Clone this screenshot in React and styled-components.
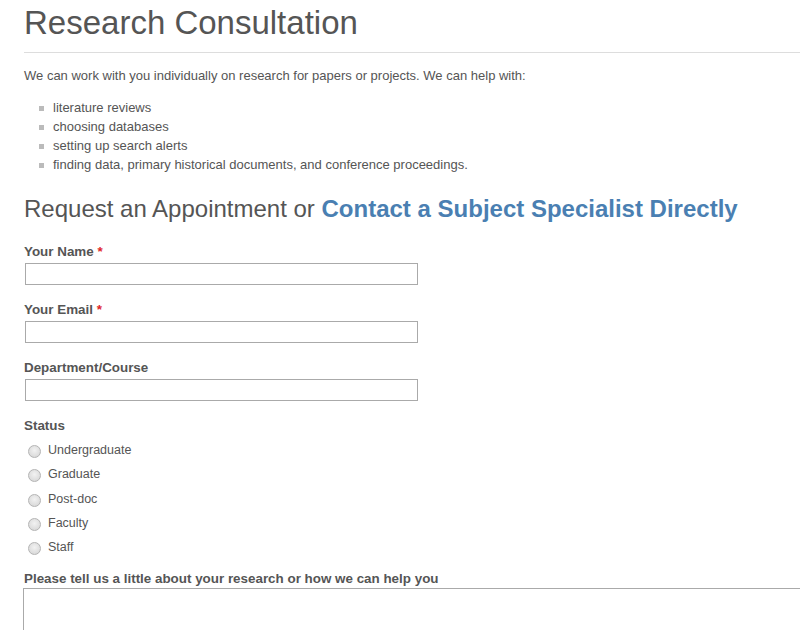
import React from "react";
import styled, { createGlobalStyle } from "styled-components";

const GlobalStyle = createGlobalStyle`
  body {
    margin: 0;
    background: #fff;
    font-family: "Liberation Sans", Arial, sans-serif;
    color: #555;
  }
`;

const Page = styled.div`
  padding: 0 0 0 24px;
  overflow: hidden;
  height: 630px;
`;

const Title = styled.h1`
  margin: 0;
  padding-top: 3px;
  font-size: 33px;
  font-weight: normal;
  line-height: 40px;
  color: #555;
  padding-bottom: 9px;
  border-bottom: 1px solid #ddd;
`;

const Intro = styled.p`
  margin: 14px 0 0;
  font-size: 13px;
  line-height: 18px;
`;

const List = styled.ul`
  margin: 13px 0 0;
  padding: 0 0 0 29px;
  list-style: none;
`;

const Item = styled.li`
  position: relative;
  font-size: 13px;
  line-height: 19px;

  &::before {
    content: "";
    position: absolute;
    left: -14px;
    top: 8px;
    width: 5px;
    height: 5px;
    background: #bbb;
  }
`;

const Subtitle = styled.h2`
  margin: 20px 0 0;
  font-size: 24px;
  font-weight: normal;
  line-height: 30px;
  color: #555;
`;

const SubLink = styled.a`
  color: #4a7fb2;
  font-weight: bold;
  text-decoration: none;
`;

const Form = styled.form`
  margin-top: 19px;
  display: flex;
  flex-direction: column;
`;

const Field = styled.div`
  display: flex;
  flex-direction: column;
  margin-bottom: ${(p) => p.gap || 16}px;
`;

const Label = styled.label`
  font-size: 13.4px;
  font-weight: bold;
  line-height: 18px;
  color: #555;
  margin-bottom: 2px;
`;

const Star = styled.span`
  color: #e0262b;
`;

const TextInput = styled.input`
  box-sizing: border-box;
  width: 393px;
  height: 22px;
  margin: 0 0 0 1px;
  border: 1px solid #aaa;
  background: #fff;
  outline: none;
`;

const RadioList = styled.div`
  display: flex;
  flex-direction: column;
  padding-top: 1px;
`;

const RadioRow = styled.label`
  display: flex;
  align-items: center;
  height: 24.3px;
  font-size: 12.5px;
  color: #555;
`;

const Radio = styled.input`
  appearance: none;
  box-sizing: border-box;
  width: 13px;
  height: 13px;
  margin: 3px 7px 0 4px;
  border-radius: 50%;
  border: 1px solid #b4b4b4;
  background: radial-gradient(circle at 50% 40%, #f2f2f2 0%, #dcdcdc 70%, #cfcfcf 100%);
`;

const TextArea = styled.textarea`
  box-sizing: border-box;
  width: 800px;
  height: 80px;
  margin: -2px 0 0 -1px;
  border: 1px solid #aaa;
  resize: none;
  outline: none;
`;

const items = [
  "literature reviews",
  "choosing databases",
  "setting up search alerts",
  "finding data, primary historical documents, and conference proceedings.",
];

const statuses = ["Undergraduate", "Graduate", "Post-doc", "Faculty", "Staff"];

export default function App() {
  return (
    <Page>
      <GlobalStyle />
      <Title>Research Consultation</Title>
      <Intro>
        We can work with you individually on research for papers or projects. We can help with:
      </Intro>
      <List>
        {items.map((t) => (
          <Item key={t}>{t}</Item>
        ))}
      </List>
      <Subtitle>
        Request an Appointment or <SubLink href="#">Contact a Subject Specialist Directly</SubLink>
      </Subtitle>
      <Form>
        <Field>
          <Label>
            Your Name <Star>*</Star>
          </Label>
          <TextInput type="text" />
        </Field>
        <Field>
          <Label>
            Your Email <Star>*</Star>
          </Label>
          <TextInput type="text" />
        </Field>
        <Field>
          <Label>Department/Course</Label>
          <TextInput type="text" />
        </Field>
        <Field gap={11}>
          <Label>Status</Label>
          <RadioList>
            {statuses.map((s) => (
              <RadioRow key={s}>
                <Radio type="radio" name="status" />
                {s}
              </RadioRow>
            ))}
          </RadioList>
        </Field>
        <Field>
          <Label>Please tell us a little about your research or how we can help you</Label>
          <TextArea />
        </Field>
      </Form>
    </Page>
  );
}
